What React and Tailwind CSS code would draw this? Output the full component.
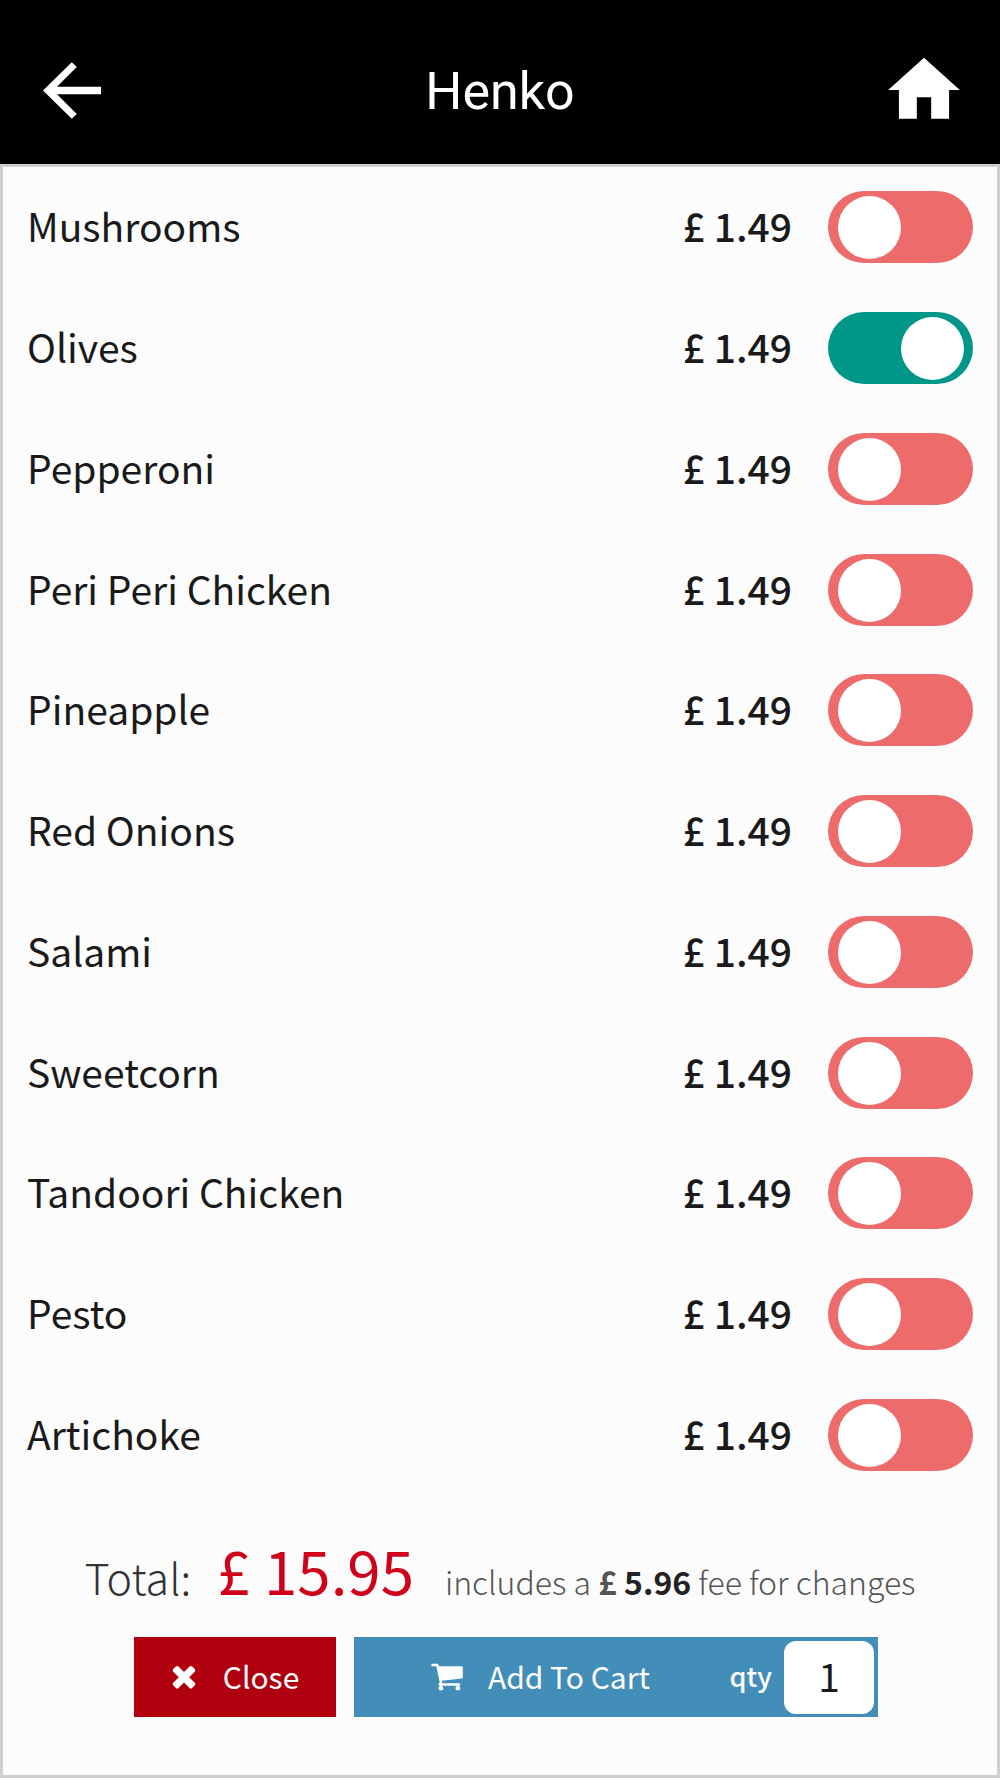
import { useState } from "react";
import { MdHome } from "react-icons/md";

const toppings = [
  "Mushrooms",
  "Olives",
  "Pepperoni",
  "Peri Peri Chicken",
  "Pineapple",
  "Red Onions",
  "Salami",
  "Sweetcorn",
  "Tandoori Chicken",
  "Pesto",
  "Artichoke",
];

function ArrowIcon() {
  return (
    <svg className="w-[58px] h-[57px]" viewBox="0 0 58 57" fill="currentColor" aria-hidden="true">
      <path d="M0 28.5 28.8.3l5 4.8L14 24.8h44v7.4H14l19.8 19.7-5 4.8z" />
    </svg>
  );
}

function TimesIcon() {
  return (
    <svg className="size-[34px]" viewBox="0 0 1792 1792" fill="currentColor" aria-hidden="true">
      <path d="M1490 1322q0 40-28 68l-136 136q-28 28-68 28t-68-28l-294-294-294 294q-28 28-68 28t-68-28l-136-136q-28-28-28-68t28-68l294-294-294-294q-28-28-28-68t28-68l136-136q28-28 68-28t68 28l294 294 294-294q28-28 68-28t68 28l136 136q28 28 28 68t-28 68l-294 294 294 294q28 28 28 68z" />
    </svg>
  );
}

function CartIcon() {
  return (
    <svg className="size-[34px]" viewBox="0 0 1792 1792" fill="currentColor" aria-hidden="true">
      <path d="M704 1536q0 52-38 90t-90 38-90-38-38-90 38-90 90-38 90 38 38 90zm896 0q0 52-38 90t-90 38-90-38-38-90 38-90 90-38 90 38 38 90zm128-1088v512q0 24-16.5 42.5t-40.5 21.5l-1044 122q13 60 13 70 0 16-24 64h920q26 0 45 19t19 45-19 45-45 19h-1024q-26 0-45-19t-19-45q0-11 8-31.5t16-36 21.5-40 15.5-29.5l-177-823h-204q-26 0-45-19t-19-45 19-45 45-19h256q16 0 28.5 6.5t19.5 15.5 13 24.5 8 26 5.5 29.5 4.5 26h1201q26 0 45 19t19 45z" />
    </svg>
  );
}

export default function App() {
  const [selected, setSelected] = useState(["Olives"]);
  const [qty, setQty] = useState("1");

  const toggle = (name) => {
    setSelected(selected.includes(name) ? selected.filter((n) => n !== name) : [...selected, name]);
  };

  return (
    <div className="min-h-screen flex flex-col bg-[#fcfcfc] text-[#1a1a1a] font-['Noto_Sans_CJK_SC',sans-serif]">
      <header className="h-[164px] pt-4 px-[33px] grid grid-cols-[1fr_auto_1fr] items-center bg-black text-white">
        <a href="#back" aria-label="Back" className="justify-self-start pl-[10px]">
          <ArrowIcon />
        </a>
        <h1 className="pt-1 text-[52px] leading-[60px] font-['Roboto',sans-serif]">Henko</h1>
        <a href="#home" aria-label="Home" className="justify-self-end">
          <MdHome className="size-[86px]" />
        </a>
      </header>

      <main className="flex-1 flex flex-col border-3 border-[#cecece]">
        <ul className="flex-1 flex flex-col px-6">
          {toppings.map((name) => (
            <li key={name} className="flex-1 flex">
              <label className="flex-1 flex items-center text-[39px] leading-[48px]">
                <span className="flex-1 pb-1">{name}</span>
                <span className="pb-1 mr-[36px] font-medium">£ 1.49</span>
                <input
                  type="checkbox"
                  checked={selected.includes(name)}
                  onChange={() => toggle(name)}
                  className="appearance-none relative w-[145px] h-[72px] rounded-full bg-[#ee6b6b] checked:bg-[#009688] before:absolute before:top-[5px] before:left-[10px] before:size-[63px] before:rounded-full before:bg-white checked:before:left-[73px]"
                />
              </label>
            </li>
          ))}
        </ul>

        <footer className="h-[280px] pb-[58px] flex flex-col justify-end">
          <p className="flex justify-center items-baseline font-light">
            <span className="text-[43px] leading-[80px] text-[#333]">Total:</span>
            <span className="ml-[26px] text-[60px] leading-[80px] font-normal text-[#d0021b]">£ 15.95</span>
            <span className="ml-[31px] text-[32px] leading-[80px] text-[#555]">
              includes a <b className="font-bold">£</b>{" "}
              <b className="font-bold text-[#222]">5.96</b> fee for changes
            </span>
          </p>
          <div className="mt-4 pl-[12px] flex justify-center gap-[18px] text-[30px] leading-[40px] text-white">
            <button className="w-[202px] h-[80px] pb-[2px] pr-1 flex items-center justify-center gap-[22px] bg-[#b00010]">
              <TimesIcon />
              Close
            </button>
            <div className="w-[524px] h-[80px] pr-[4px] flex items-center bg-[#438eb9]">
              <button className="flex-1 h-full pb-[2px] pr-1 flex items-center justify-center gap-[24px]">
                <CartIcon />
                Add To Cart
              </button>
              <label htmlFor="qty" className="pb-[2px] mr-[12px] text-[27px] font-medium">
                qty
              </label>
              <input
                id="qty"
                type="text"
                inputMode="numeric"
                value={qty}
                onChange={(e) => setQty(e.target.value)}
                className="w-[90px] h-[73px] pb-1 rounded-xl bg-white text-center text-[39px] leading-[48px] text-[#1a1a1a]"
              />
            </div>
          </div>
        </footer>
      </main>
    </div>
  );
}
